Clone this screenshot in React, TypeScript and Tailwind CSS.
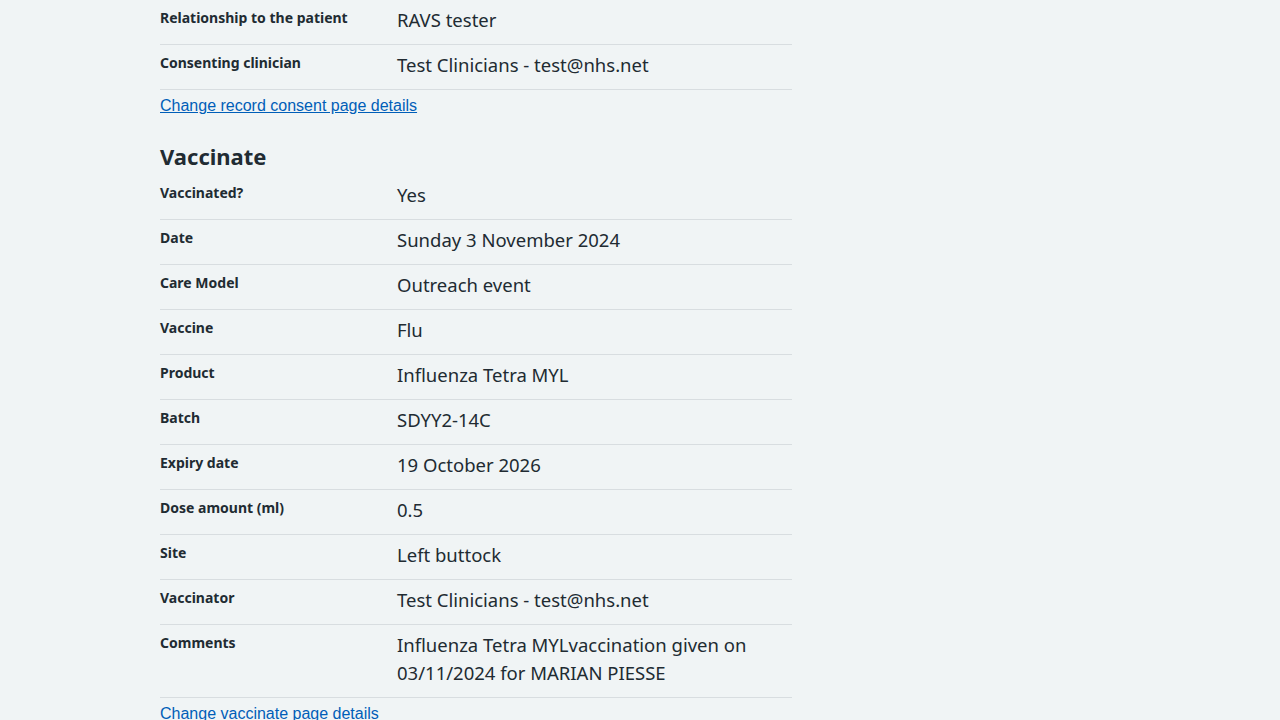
import React from "react";

const consent = [
  ["Relationship to the patient", "RAVS tester"],
  ["Consenting clinician", "Test Clinicians - test@nhs.net"],
];

const vaccinate = [
  ["Vaccinated?", "Yes"],
  ["Date", "Sunday 3 November 2024"],
  ["Care Model", "Outreach event"],
  ["Vaccine", "Flu"],
  ["Product", "Influenza Tetra MYL"],
  ["Batch", "SDYY2-14C"],
  ["Expiry date", "19 October 2026"],
  ["Dose amount (ml)", "0.5"],
  ["Site", "Left buttock"],
  ["Vaccinator", "Test Clinicians - test@nhs.net"],
  ["Comments", "Influenza Tetra MYLvaccination given on 03/11/2024 for MARIAN PIESSE"],
];

function Row({ k, v }: { k: string; v: string }) {
  return (
    <div className="flex border-b border-[#d8dde0] pt-[4px] pb-[10px]">
      <dt className="w-[237px] shrink-0 pt-[4px] text-[14px] font-bold leading-[20px]">{k}</dt>
      <dd className="flex-1 pt-[2px] text-[18.5px] leading-[28px]">{v}</dd>
    </div>
  );
}

export default function App() {
  return (
    <div
      className="min-h-[720px] bg-[#f0f4f5] text-[#212b32]"
      style={{ fontFamily: '"Noto Sans", sans-serif' }}
    >
      <div className="ml-[160px] w-[632px]">
        <dl>
          {consent.map(([k, v]) => (
            <Row key={k} k={k} v={v} />
          ))}
        </dl>
        <a
          href="#"
          className="mt-[7px] block text-[16px] leading-[18px] text-[#005eb8] underline"
          style={{ fontFamily: '"Liberation Sans", Arial, sans-serif' }}
        >
          Change record consent page details
        </a>
        <h2 className="mt-[25px] text-[22px] font-bold leading-[32px]">Vaccinate</h2>
        <dl className="mt-[3px]">
          {vaccinate.map(([k, v]) => (
            <Row key={k} k={k} v={v} />
          ))}
        </dl>
        <a
          href="#"
          className="mt-[7px] block text-[16px] leading-[18px] text-[#005eb8] underline"
          style={{ fontFamily: '"Liberation Sans", Arial, sans-serif' }}
        >
          Change vaccinate page details
        </a>
      </div>
    </div>
  );
}
